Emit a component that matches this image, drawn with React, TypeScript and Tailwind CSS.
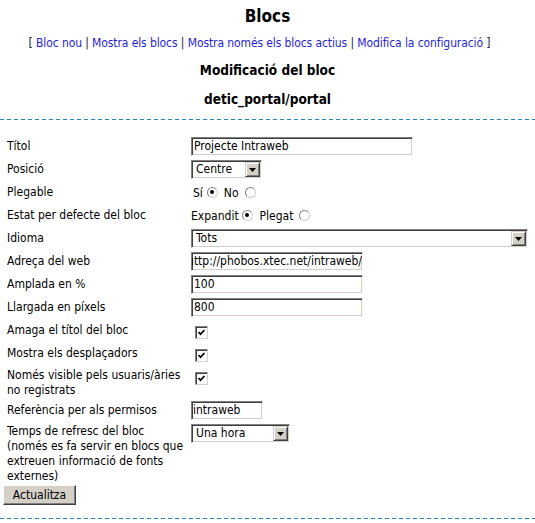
import type { ReactNode } from "react";

/**
 * Block edit form from an old admin panel: classic Windows controls,
 * a two-column label/control table between two dashed rules.
 */

const DASHED =
  "h-px w-full bg-[repeating-linear-gradient(to_right,#2b86c0_0_4px,transparent_4px_7px)]";

function Sunken({ className, children }: { className: string; children?: ReactNode }) {
  return (
    <div
      className={`flex h-[19px] items-center overflow-hidden whitespace-nowrap border border-t-[#808080] border-l-[#808080] border-b-white border-r-white bg-white text-[12px] leading-[15px] text-black shadow-[inset_1px_1px_0_#404040,inset_-1px_-1px_0_#d4d0c8] ${className}`}
    >
      {children}
    </div>
  );
}

function DropButton() {
  return (
    <span className="my-[1px] mr-[1px] flex h-[15px] w-[15px] shrink-0 items-center justify-center border border-t-[#d4d0c8] border-l-[#d4d0c8] border-b-[#404040] border-r-[#404040] bg-[#d4d0c8] shadow-[inset_1px_1px_0_#fff,inset_-1px_-1px_0_#808080]">
      <svg width="7" height="4" viewBox="0 0 7 4">
        <polygon points="0,0 7,0 3.5,4" fill="#000" />
      </svg>
    </span>
  );
}

function Select({ className, value }: { className: string; value: string }) {
  return (
    <Sunken className={`items-stretch ${className}`}>
      <span className="flex flex-1 items-center pl-[4px]">{value}</span>
      <DropButton />
    </Sunken>
  );
}

function Radio({ checked }: { checked?: boolean }) {
  return (
    <span className="mb-[3px] flex h-[11px] w-[11px] items-center justify-center rounded-full border border-t-[#808080] border-l-[#808080] border-b-[#d4d0c8] border-r-[#d4d0c8] bg-white">
      {checked && <span className="h-[4px] w-[4px] rounded-full bg-black" />}
    </span>
  );
}

function Check() {
  return (
    <span className="ml-[4px] flex h-[13px] w-[13px] items-center justify-center border border-t-[#808080] border-l-[#808080] border-b-[#d4d0c8] border-r-[#d4d0c8] bg-white shadow-[inset_1px_1px_0_#404040]">
      <svg width="9" height="9" viewBox="0 0 9 9">
        <polyline points="1.5,4 3.5,6.2 7.5,2" fill="none" stroke="#000" strokeWidth="1.7" />
      </svg>
    </span>
  );
}

function Row({ label, children }: { label: ReactNode; children?: ReactNode }) {
  return (
    <div className="flex h-[23px] items-center">
      <div className="w-[191px] shrink-0 pl-[7px] pr-[6px]">{label}</div>
      <div className="flex items-center">{children}</div>
    </div>
  );
}

export default function App() {
  return (
    <div className="h-[523px] w-[535px] bg-white font-['DejaVu_Sans_Condensed','Liberation_Sans',sans-serif] text-[12px] leading-[15px] text-black">
      <div className="pt-[6px] text-center text-[17px] font-bold leading-[20px]">Blocs</div>
      <div className="mt-[10px] pr-[16px] text-center tracking-[-0.1px] text-[#1a1a3a]">
        [ <span className="text-[#1f1fd6]">Bloc nou</span> |{" "}
        <span className="text-[#1f1fd6]">Mostra els blocs</span> |{" "}
        <span className="text-[#1f1fd6]">Mostra només els blocs actius</span> |{" "}
        <span className="text-[#1f1fd6]">Modifica la configuració</span> ]
      </div>
      <div className="mt-[11px] text-center text-[13.5px] font-bold leading-[17px]">Modificació del bloc</div>
      <div className="mt-[12px] text-center text-[13.5px] font-bold leading-[17px]">detic_portal/portal</div>
      <div className={`mt-[11px] ${DASHED}`} />

      <div className="mt-[15px]">
        <Row label="Títol">
          <Sunken className="w-[222px] px-[2px]">Projecte Intraweb</Sunken>
        </Row>
        <Row label="Posició">
          <Select className="w-[71px]" value="Centre" />
        </Row>
        <Row label="Plegable">
          <div className="flex items-center pt-[2px]">
            <span className="ml-[2px] mr-[4px]">Sí</span>
            <Radio checked />
            <span className="ml-[6px] mr-[6px]">No</span>
            <Radio />
          </div>
        </Row>
        <Row label="Estat per defecte del bloc">
          <div className="flex items-center pt-[2px]">
            <span className="mr-[3px]">Expandit</span>
            <Radio checked />
            <span className="ml-[7px] mr-[6px]">Plegat</span>
            <Radio />
          </div>
        </Row>
        <Row label="Idioma">
          <Select className="w-[337px]" value="Tots" />
        </Row>
        <Row label="Adreça del web">
          <Sunken className="w-[172px] justify-end px-[1px]">
            <span className="-mr-[1px]">http://phobos.xtec.net/intraweb/</span>
          </Sunken>
        </Row>
        <Row label="Amplada en %">
          <Sunken className="w-[172px] px-[2px]">100</Sunken>
        </Row>
        <Row label="Llargada en píxels">
          <Sunken className="w-[172px] px-[2px]">800</Sunken>
        </Row>
        <Row label="Amaga el títol del bloc">
          <div className="pt-[4px]">
            <Check />
          </div>
        </Row>
        <Row label="Mostra els desplaçadors">
          <div className="pt-[4px]">
            <Check />
          </div>
        </Row>
        <div className="flex h-[34px] items-start">
          <div className="w-[191px] shrink-0 pl-[7px] pr-[6px] pt-[3px]">
            Només visible pels usuaris/àries no registrats
          </div>
          <div className="pt-[7px]">
            <Check />
          </div>
        </div>
        <Row label="Referència per als permisos">
          <Sunken className="w-[72px] px-[1px]">intraweb</Sunken>
        </Row>
        <div className="flex items-start pb-[1px]">
          <div className="w-[191px] shrink-0 pl-[7px] pr-[6px] pt-[2px]">
            Temps de refresc del bloc (només es fa servir en blocs que extreuen informació de fonts
            externes)
          </div>
          <div className="pt-[2px]">
            <Select className="w-[99px]" value="Una hora" />
          </div>
        </div>
      </div>

      <div className="pl-[3px]">
        <button className="h-[20px] w-[73px] border border-t-white border-l-white border-b-[#404040] border-r-[#404040] bg-[#d4d0c8] text-[12px] leading-[15px] text-black shadow-[inset_-1px_-1px_0_#808080]">
          Actualitza
        </button>
      </div>
      <div className={`mt-[13px] ${DASHED}`} />
    </div>
  );
}
